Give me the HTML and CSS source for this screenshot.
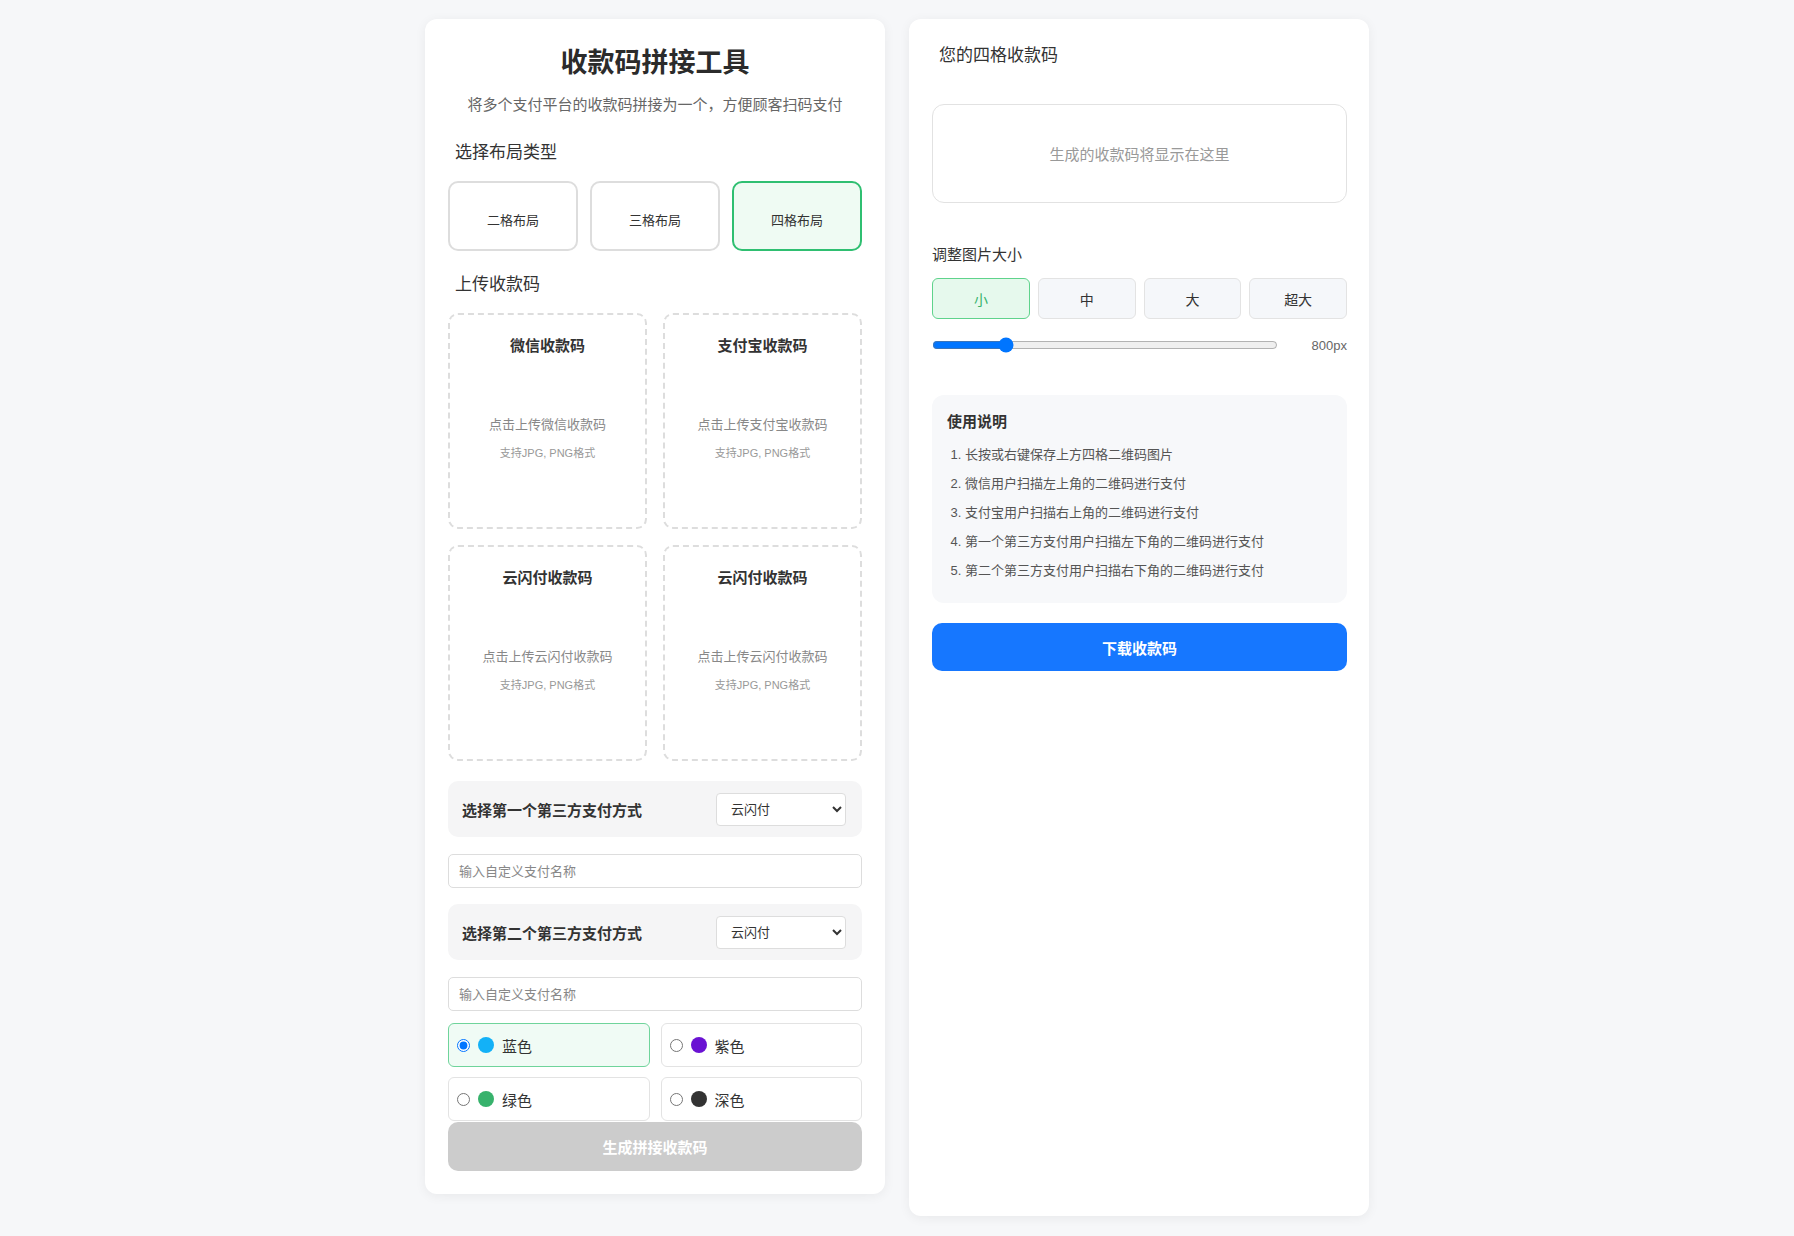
FILE: index.html
```html
<!DOCTYPE html>
<html lang="zh-CN">
<head>
<meta charset="utf-8">
<title>收款码拼接工具</title>
<link rel="stylesheet" href="styles.css">
</head>
<body>
<div class="page">
  <section class="card card-left">
    <h1 class="title">收款码拼接工具</h1>
    <p class="subtitle">将多个支付平台的收款码拼接为一个，方便顾客扫码支付</p>

    <h3 class="section-title">选择布局类型</h3>
    <div class="layout-options">
      <button class="layout-btn">二格布局</button>
      <button class="layout-btn">三格布局</button>
      <button class="layout-btn active">四格布局</button>
    </div>

    <h3 class="section-title upload-title">上传收款码</h3>
    <div class="upload-grid">
      <div class="upload-box">
        <div class="upload-name">微信收款码</div>
        <div class="upload-area">
          <p class="upload-hint">点击上传微信收款码</p>
          <p class="upload-format">支持JPG, PNG格式</p>
        </div>
      </div>
      <div class="upload-box">
        <div class="upload-name">支付宝收款码</div>
        <div class="upload-area">
          <p class="upload-hint">点击上传支付宝收款码</p>
          <p class="upload-format">支持JPG, PNG格式</p>
        </div>
      </div>
      <div class="upload-box">
        <div class="upload-name">云闪付收款码</div>
        <div class="upload-area">
          <p class="upload-hint">点击上传云闪付收款码</p>
          <p class="upload-format">支持JPG, PNG格式</p>
        </div>
      </div>
      <div class="upload-box">
        <div class="upload-name">云闪付收款码</div>
        <div class="upload-area">
          <p class="upload-hint">点击上传云闪付收款码</p>
          <p class="upload-format">支持JPG, PNG格式</p>
        </div>
      </div>
    </div>

    <div class="select-row first-select">
      <label class="select-label">选择第一个第三方支付方式</label>
      <select class="pay-select">
        <option>云闪付</option>
        <option>京东支付</option>
        <option>自定义</option>
      </select>
    </div>
    <input class="custom-input" type="text" placeholder="输入自定义支付名称">

    <div class="select-row">
      <label class="select-label">选择第二个第三方支付方式</label>
      <select class="pay-select">
        <option>云闪付</option>
        <option>京东支付</option>
        <option>自定义</option>
      </select>
    </div>
    <input class="custom-input" type="text" placeholder="输入自定义支付名称">

    <div class="color-grid">
      <label class="color-option active">
        <input type="radio" name="theme" checked>
        <span class="dot dot-blue"></span>
        <span class="color-name">蓝色</span>
      </label>
      <label class="color-option">
        <input type="radio" name="theme">
        <span class="dot dot-purple"></span>
        <span class="color-name">紫色</span>
      </label>
      <label class="color-option">
        <input type="radio" name="theme">
        <span class="dot dot-green"></span>
        <span class="color-name">绿色</span>
      </label>
      <label class="color-option">
        <input type="radio" name="theme">
        <span class="dot dot-dark"></span>
        <span class="color-name">深色</span>
      </label>
    </div>
    <button class="generate-btn" disabled>生成拼接收款码</button>
  </section>

  <section class="card card-right">
    <h3 class="result-title">您的四格收款码</h3>
    <div class="preview-box">生成的收款码将显示在这里</div>

    <div class="size-title">调整图片大小</div>
    <div class="size-options">
      <button class="size-btn active">小</button>
      <button class="size-btn">中</button>
      <button class="size-btn">大</button>
      <button class="size-btn">超大</button>
    </div>
    <div class="slider-row">
      <input class="size-slider" type="range" min="400" max="2400" value="800">
      <span class="size-value">800px</span>
    </div>

    <div class="instructions">
      <h4 class="instructions-title">使用说明</h4>
      <ol class="instructions-list">
        <li>长按或右键保存上方四格二维码图片</li>
        <li>微信用户扫描左上角的二维码进行支付</li>
        <li>支付宝用户扫描右上角的二维码进行支付</li>
        <li>第一个第三方支付用户扫描左下角的二维码进行支付</li>
        <li>第二个第三方支付用户扫描右下角的二维码进行支付</li>
      </ol>
    </div>
    <button class="download-btn">下载收款码</button>
  </section>
</div>
</body>
</html>
```
FILE: styles.css
```css
* {
  box-sizing: border-box;
}

html, body {
  margin: 0;
  padding: 0;
}

body {
  background: #f6f7f9;
  font-family: "Liberation Sans", "Noto Sans CJK SC", sans-serif;
  color: #333;
}

.page {
  display: flex;
  justify-content: center;
  align-items: flex-start;
  gap: 24px;
  padding: 19px 0;
}

.card {
  width: 460px;
  background: #fff;
  border-radius: 12px;
  box-shadow: 0 2px 12px rgba(0, 0, 0, 0.06);
}

.card-left {
  padding: 26px 23px 23px 23px;
}

.card-right {
  padding: 24px 22px 24px 23px;
  height: calc(100vh - 39px);
}

/* ---------- left card ---------- */
.title {
  margin: 0;
  font-size: 27px;
  line-height: 37px;
  font-weight: 700;
  text-align: center;
  color: #2b2b2b;
}

.subtitle {
  margin: 12px 0 0 0;
  font-size: 15px;
  line-height: 22px;
  text-align: center;
  color: #666;
}

.section-title {
  margin: 25px 0 0 0;
  padding-left: 7px;
  font-size: 17px;
  line-height: 24px;
  font-weight: 400;
  color: #333;
}

.upload-title {
  margin-top: 22px;
}

.layout-options {
  display: flex;
  gap: 12px;
  margin-top: 16px;
}

.layout-btn {
  flex: 1;
  height: 70px;
  padding: 7px 0 0 0;
  border: 2px solid #ddd;
  border-radius: 10px;
  background: #fff;
  font-family: inherit;
  font-size: 13px;
  color: #333;
}

.layout-btn.active {
  border-color: #2fbf71;
  background: #effbf3;
}

.upload-grid {
  display: grid;
  grid-template-columns: 1fr 1fr;
  column-gap: 16px;
  row-gap: 16px;
  margin-top: 16px;
}

.upload-box {
  height: 216px;
  border: 2px dashed #ddd;
  border-radius: 10px;
  padding: 20px 10px;
  display: flex;
  flex-direction: column;
  text-align: center;
}

.upload-name {
  font-size: 15px;
  line-height: 21px;
  font-weight: 700;
  color: #333;
}

.upload-area {
  flex: 1;
  display: flex;
  flex-direction: column;
  justify-content: center;
  margin-top: 15px;
}

.upload-hint {
  margin: 0;
  font-size: 13px;
  line-height: 20px;
  color: #888;
}

.upload-format {
  margin: 8px 0 0 0;
  font-size: 11px;
  line-height: 20px;
  color: #999;
}

.select-row {
  display: flex;
  align-items: center;
  justify-content: space-between;
  height: 56px;
  margin-top: 16px;
  padding: 0 16px 0 14px;
  background: #f5f5f6;
  border-radius: 10px;
}

.first-select {
  margin-top: 20px;
}

.select-label {
  font-size: 15px;
  font-weight: 700;
  color: #333;
}

.pay-select {
  width: 130px;
  height: 33px;
  padding: 0 8px 0 10px;
  border: 1px solid #ddd;
  border-radius: 4px;
  background: #fff;
  font-family: inherit;
  font-size: 13px;
  color: #333;
}

.custom-input {
  display: block;
  width: 100%;
  height: 34px;
  margin-top: 17px;
  padding: 0 10px;
  border: 1px solid #ddd;
  border-radius: 5px;
  font-family: inherit;
  font-size: 13px;
  color: #333;
}

.custom-input::placeholder {
  color: #888;
}

.color-grid {
  display: grid;
  grid-template-columns: 1fr 1fr;
  column-gap: 11px;
  row-gap: 10px;
  margin-top: 12px;
}

.color-option {
  display: flex;
  align-items: center;
  gap: 8px;
  height: 44px;
  padding: 0 8px;
  border: 1px solid #e3e3e3;
  border-radius: 6px;
  background: #fff;
  font-size: 15px;
  color: #333;
}

.color-option.active {
  border-color: #6fd49b;
  background: #f0fbf5;
}

.color-option input {
  margin: 0;
  width: 13px;
  height: 13px;
}

.dot {
  width: 16px;
  height: 16px;
  border-radius: 50%;
  display: inline-block;
}

.dot-blue { background: #13b1f7; }
.dot-purple { background: #6a12d3; }
.dot-green { background: #37b26c; }
.dot-dark { background: #333; }

.generate-btn {
  display: block;
  width: 100%;
  height: 49px;
  margin-top: 1px;
  border: none;
  border-radius: 10px;
  background: #cccccc;
  color: #fff;
  font-family: inherit;
  font-size: 15px;
  font-weight: 700;
}

/* ---------- right card ---------- */
.result-title {
  margin: 0;
  padding-left: 7px;
  font-size: 17px;
  line-height: 26px;
  font-weight: 400;
  color: #333;
}

.preview-box {
  height: 99px;
  margin-top: 35px;
  border: 1px solid #e2e2e2;
  border-radius: 12px;
  display: flex;
  align-items: center;
  justify-content: center;
  font-size: 15px;
  color: #999;
}

.size-title {
  margin-top: 41px;
  font-size: 15px;
  line-height: 22px;
  color: #333;
}

.size-options {
  display: flex;
  gap: 8px;
  margin-top: 12px;
}

.size-btn {
  flex: 1;
  height: 41px;
  border: 1px solid #e3e3e3;
  border-radius: 6px;
  background: #f5f7fa;
  font-family: inherit;
  font-size: 14px;
  color: #333;
}

.size-btn.active {
  border-color: #5fd38c;
  background: #e6f9ed;
  color: #37b26c;
}

.slider-row {
  display: flex;
  align-items: center;
  justify-content: space-between;
  height: 16px;
  margin-top: 18px;
}

.size-slider {
  width: 346px;
  margin: 0;
}

.size-value {
  font-size: 13px;
  color: #666;
}

.instructions {
  margin-top: 42px;
  padding: 15px 15px 14px 15px;
  background: #f7f8fa;
  border-radius: 12px;
}

.instructions-title {
  margin: 0;
  font-size: 15px;
  line-height: 24px;
  font-weight: 700;
  color: #333;
}

.instructions-list {
  margin: 10px 0 0 0;
  padding-left: 18px;
  font-size: 13px;
  line-height: 21px;
  color: #555;
}

.instructions-list li {
  margin-bottom: 8px;
}

.download-btn {
  display: block;
  width: 100%;
  height: 48px;
  margin-top: 20px;
  border: none;
  border-radius: 10px;
  background: #1677ff;
  color: #fff;
  font-family: inherit;
  font-size: 15px;
  font-weight: 700;
}
```
